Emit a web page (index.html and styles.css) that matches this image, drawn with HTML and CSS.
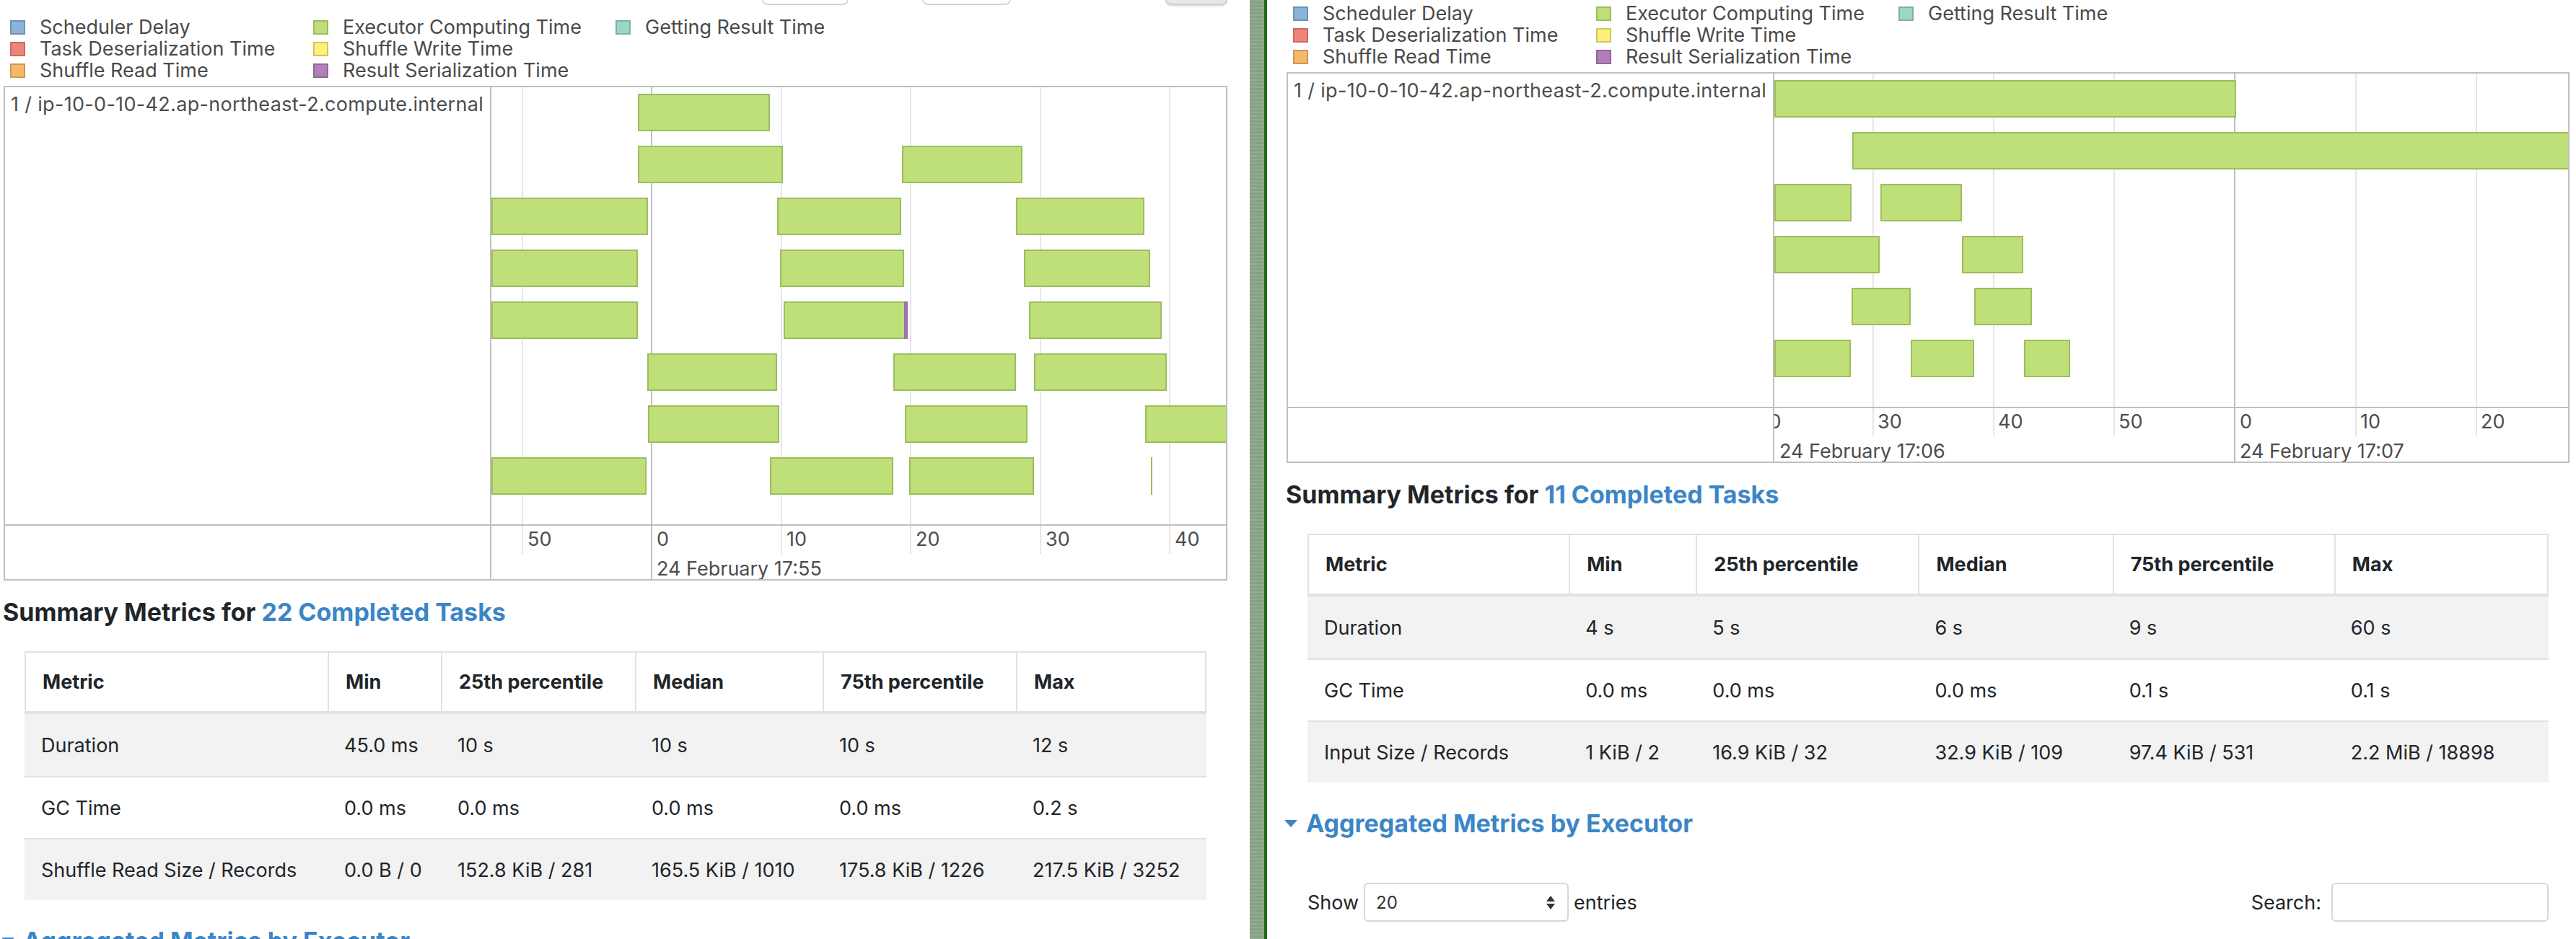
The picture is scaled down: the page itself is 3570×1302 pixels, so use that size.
FILE: index.html
```html
<!DOCTYPE html>
<html lang="en">
<head>
<meta charset="utf-8">
<title>Stage details</title>
<link rel="stylesheet" href="styles.css">
</head>
<body>
<div class="pane pane-left">
  <div class="pane-inner">
    <div class="controls">
      <div class="ctl-input ctl-a"></div>
      <div class="ctl-input ctl-b"></div>
      <div class="ctl-btn"></div>
    </div>
    <div class="legend">
      <div class="lg-item"><span class="sw sw-sched"></span>Scheduler Delay</div>
      <div class="lg-item"><span class="sw sw-deser"></span>Task Deserialization Time</div>
      <div class="lg-item"><span class="sw sw-sread"></span>Shuffle Read Time</div>
      <div class="lg-item"><span class="sw sw-exec"></span>Executor Computing Time</div>
      <div class="lg-item"><span class="sw sw-swrite"></span>Shuffle Write Time</div>
      <div class="lg-item"><span class="sw sw-ser"></span>Result Serialization Time</div>
      <div class="lg-item"><span class="sw sw-get"></span>Getting Result Time</div>
    </div>
    <div class="tl">
      <div class="tl-labels">
        <div class="tl-label">1 / ip-10-0-10-42.ap-northeast-2.compute.internal</div>
        <div class="tl-label-axis"></div>
      </div>
      <div class="tl-chart">
        <div class="gl" style="left:42px"></div>
        <div class="gl gl-major" style="left:221px"></div>
        <div class="gl" style="left:401px"></div>
        <div class="gl" style="left:580px"></div>
        <div class="gl" style="left:760px"></div>
        <div class="gl" style="left:939px"></div>
        <div class="tl-rows">
          <div class="tl-row"><div class="bar" style="left:203px;width:183px"></div></div>
          <div class="tl-row"><div class="bar" style="left:203px;width:201px"></div><div class="bar" style="left:569px;width:167px"></div></div>
          <div class="tl-row"><div class="bar" style="left:0;width:217px"></div><div class="bar" style="left:396px;width:172px"></div><div class="bar" style="left:727px;width:178px"></div></div>
          <div class="tl-row"><div class="bar" style="left:0;width:203px"></div><div class="bar" style="left:400px;width:172px"></div><div class="bar" style="left:738px;width:175px"></div></div>
          <div class="tl-row"><div class="bar" style="left:0;width:203px"></div><div class="bar" style="left:405px;width:172px"><span class="bar-ser"></span></div><div class="bar" style="left:745px;width:184px"></div></div>
          <div class="tl-row"><div class="bar" style="left:216px;width:180px"></div><div class="bar" style="left:557px;width:170px"></div><div class="bar" style="left:752px;width:184px"></div></div>
          <div class="tl-row"><div class="bar" style="left:217px;width:182px"></div><div class="bar" style="left:573px;width:170px"></div><div class="bar" style="left:906px;width:150px"></div></div>
          <div class="tl-row"><div class="bar" style="left:0;width:215px"></div><div class="bar" style="left:386px;width:171px"></div><div class="bar" style="left:579px;width:173px"></div><div class="bar bar-thin" style="left:914px"></div></div>
        </div>
        <div class="tl-axis">
          <span class="tick" style="left:50px">50</span>
          <span class="tick" style="left:229px">0</span>
          <span class="tick" style="left:409px">10</span>
          <span class="tick" style="left:588px">20</span>
          <span class="tick" style="left:768px">30</span>
          <span class="tick" style="left:947px">40</span>
          <span class="tick date" style="left:229px">24 February 17:55</span>
        </div>
      </div>
    </div>
    <h4 class="sec-title">Summary Metrics for <a class="lnk" href="#tasks">22 Completed Tasks</a></h4>
    <table class="metrics m-left">
      <thead>
        <tr><th>Metric</th><th>Min</th><th>25th percentile</th><th>Median</th><th>75th percentile</th><th>Max</th></tr>
      </thead>
      <tbody>
        <tr><td>Duration</td><td>45.0 ms</td><td>10 s</td><td>10 s</td><td>10 s</td><td>12 s</td></tr>
        <tr><td>GC Time</td><td>0.0 ms</td><td>0.0 ms</td><td>0.0 ms</td><td>0.0 ms</td><td>0.2 s</td></tr>
        <tr><td>Shuffle Read Size / Records</td><td>0.0 B / 0</td><td>152.8 KiB / 281</td><td>165.5 KiB / 1010</td><td>175.8 KiB / 1226</td><td>217.5 KiB / 3252</td></tr>
      </tbody>
    </table>
    <h4 class="sec-title agg"><span class="caret"></span>Aggregated Metrics by Executor</h4>
    <div class="dt-controls">
      <div class="dt-len">Show <div class="sel"><span>20</span><span class="sel-arrows"><span class="up"></span><span class="down"></span></span></div> entries</div>
      <div class="dt-search">Search: <input class="search-input" type="search" aria-label="Search"></div>
    </div>
  </div>
</div>
<div class="divider"></div>
<div class="divider-edge"></div>
<div class="pane pane-right">
  <div class="pane-inner">
    <div class="controls">
      <div class="ctl-input ctl-a"></div>
      <div class="ctl-input ctl-b"></div>
      <div class="ctl-btn"></div>
    </div>
    <div class="legend">
      <div class="lg-item"><span class="sw sw-sched"></span>Scheduler Delay</div>
      <div class="lg-item"><span class="sw sw-deser"></span>Task Deserialization Time</div>
      <div class="lg-item"><span class="sw sw-sread"></span>Shuffle Read Time</div>
      <div class="lg-item"><span class="sw sw-exec"></span>Executor Computing Time</div>
      <div class="lg-item"><span class="sw sw-swrite"></span>Shuffle Write Time</div>
      <div class="lg-item"><span class="sw sw-ser"></span>Result Serialization Time</div>
      <div class="lg-item"><span class="sw sw-get"></span>Getting Result Time</div>
    </div>
    <div class="tl">
      <div class="tl-labels">
        <div class="tl-label">1 / ip-10-0-10-42.ap-northeast-2.compute.internal</div>
        <div class="tl-label-axis"></div>
      </div>
      <div class="tl-chart">
        <div class="gl" style="left:-31px"></div>
        <div class="gl" style="left:136px"></div>
        <div class="gl" style="left:303px"></div>
        <div class="gl" style="left:470px"></div>
        <div class="gl gl-major" style="left:637px"></div>
        <div class="gl" style="left:805px"></div>
        <div class="gl" style="left:972px"></div>
        <div class="tl-rows">
          <div class="tl-row"><div class="bar" style="left:0;width:640px"></div></div>
          <div class="tl-row"><div class="bar" style="left:108px;width:1000px"></div></div>
          <div class="tl-row"><div class="bar" style="left:0;width:107px"></div><div class="bar" style="left:147px;width:113px"></div></div>
          <div class="tl-row"><div class="bar" style="left:0;width:146px"></div><div class="bar" style="left:260px;width:85px"></div></div>
          <div class="tl-row"><div class="bar" style="left:107px;width:82px"></div><div class="bar" style="left:277px;width:80px"></div></div>
          <div class="tl-row"><div class="bar" style="left:0;width:106px"></div><div class="bar" style="left:189px;width:88px"></div><div class="bar" style="left:346px;width:64px"></div></div>
        </div>
        <div class="tl-axis">
          <span class="tick" style="left:-24px">20</span>
          <span class="tick" style="left:143px">30</span>
          <span class="tick" style="left:310px">40</span>
          <span class="tick" style="left:477px">50</span>
          <span class="tick" style="left:645px">0</span>
          <span class="tick" style="left:812px">10</span>
          <span class="tick" style="left:979px">20</span>
          <span class="tick date" style="left:7px">24 February 17:06</span>
          <span class="tick date" style="left:645px">24 February 17:07</span>
        </div>
      </div>
    </div>
    <h4 class="sec-title">Summary Metrics for <a class="lnk" href="#tasks">11 Completed Tasks</a></h4>
    <table class="metrics m-right">
      <thead>
        <tr><th>Metric</th><th>Min</th><th>25th percentile</th><th>Median</th><th>75th percentile</th><th>Max</th></tr>
      </thead>
      <tbody>
        <tr><td>Duration</td><td>4 s</td><td>5 s</td><td>6 s</td><td>9 s</td><td>60 s</td></tr>
        <tr><td>GC Time</td><td>0.0 ms</td><td>0.0 ms</td><td>0.0 ms</td><td>0.1 s</td><td>0.1 s</td></tr>
        <tr><td>Input Size / Records</td><td>1 KiB / 2</td><td>16.9 KiB / 32</td><td>32.9 KiB / 109</td><td>97.4 KiB / 531</td><td>2.2 MiB / 18898</td></tr>
      </tbody>
    </table>
    <h4 class="sec-title agg"><span class="caret"></span>Aggregated Metrics by Executor</h4>
    <div class="dt-controls">
      <div class="dt-len">Show <div class="sel"><span>20</span><span class="sel-arrows"><span class="up"></span><span class="down"></span></span></div> entries</div>
      <div class="dt-search">Search: <input class="search-input" type="search" aria-label="Search"></div>
    </div>
  </div>
</div>
</body>
</html>
```

FILE: styles.css
```css
* { box-sizing: border-box; }
html, body { margin: 0; padding: 0; }
body {
  width: 3570px;
  height: 1302px;
  overflow: hidden;
  display: flex;
  font-family: Inter, "Noto Sans", sans-serif;
  font-size: 27px;
  color: #212529;
  background: #fff;
}
.pane { height: 1302px; overflow: hidden; flex: none; }
.pane-left { width: 1732px; padding: 0 31px 0 5px; }
.pane-right { width: 1814px; padding: 0 9px 0 27px; }
.divider {
  width: 20px;
  flex: none;
  background: #8da78b;
  background-image: repeating-linear-gradient(0deg, rgba(255,255,255,0.05) 0 2px, rgba(0,0,0,0.04) 2px 5px);
}
.divider-edge { width: 4px; flex: none; background: #1e6b1f; }
.pane-left .pane-inner { margin-top: -33px; }
.pane-right .pane-inner { margin-top: -52px; }

/* top controls (clipped) */
.controls { display: flex; height: 40px; margin-bottom: 16px; }
.ctl-input { height: 40px; border: 2px solid #d3d8dd; border-radius: 8px; background: #fff; flex: none; }
.ctl-a { width: 120px; margin-left: 1051px; }
.ctl-b { width: 123px; margin-left: 102px; }
.ctl-btn {
  width: 86px; height: 40px; margin-left: auto; flex: none;
  background: #e8e8e8; border: 2px solid #d0d0d0; border-radius: 8px;
  box-shadow: 0 2px 2px rgba(0,0,0,0.12);
}

/* legend */
.legend {
  display: grid;
  grid-template-columns: 420px 419px auto;
  grid-template-rows: repeat(3, 30px);
  grid-auto-flow: column;
  padding-left: 9px;
  margin-bottom: 6px;
  color: #4a4a4a;
}
.lg-item { display: flex; align-items: center; gap: 20px; white-space: nowrap; line-height: 30px; }
.sw { width: 21px; height: 20px; border: 2px solid; flex: none; }
.sw-sched { background: #8bb2d8; border-color: #6e93b3; }
.sw-deser { background: #ee8677; border-color: #c86b5f; }
.sw-sread { background: #f5b96c; border-color: #cf9955; }
.sw-exec { background: #bfdf78; border-color: #9dbc5e; }
.sw-swrite { background: #fdf17b; border-color: #d3c65f; }
.sw-ser { background: #b37fba; border-color: #93679a; }
.sw-get { background: #9dd5c8; border-color: #7fb0a6; }

/* timeline */
.tl { display: flex; border: 2px solid #bfbfbf; color: #4d4d4d; }
.tl-labels { width: 674px; flex: none; border-right: 2px solid #bfbfbf; display: flex; flex-direction: column; }
.tl-label { flex: 1; padding: 7px 8px; line-height: 34px; white-space: nowrap; letter-spacing: 0.32px; }
.tl-label-axis { height: 76px; flex: none; border-top: 2px solid #bfbfbf; }
.tl-chart { flex: 1; min-width: 0; position: relative; overflow: hidden; display: flex; flex-direction: column; }
.gl { position: absolute; top: 0; bottom: 35px; width: 2px; background: #e6e6e6; }
.gl-major { bottom: 0; background: #bfbfbf; }
.tl-rows { display: flex; flex-direction: column; gap: 20px; padding: 9px 0 41px; }
.tl-row { position: relative; height: 52px; }
.bar { position: absolute; top: 0; height: 52px; background: #bfdf78; border: 2px solid #9dbd5e; }
.bar-thin { width: 2px; border: 0; background: #9dbd5e; }
.bar-ser { position: absolute; right: -2px; top: -2px; bottom: -2px; width: 5px; background: #a36fae; }
.tl-axis { height: 76px; flex: none; border-top: 2px solid #bfbfbf; position: relative; }
.tick { position: absolute; top: 4px; line-height: 30px; white-space: nowrap; }
.tick.date { top: 45px; }

/* headings */
.sec-title { font-size: 34px; font-weight: 700; line-height: 42px; margin: 23px 0 0 -1px; color: #212529; white-space: nowrap; }
.lnk { color: #3c85c6; text-decoration: none; }
.agg { color: #3c85c6; margin-top: 36px; display: flex; align-items: center; }
.caret {
  width: 0; height: 0; margin-left: -2px; margin-right: 12px;
  border-left: 9px solid transparent; border-right: 9px solid transparent; border-top: 10px solid #3c85c6;
}

/* metrics table */
.metrics {
  border-collapse: separate;
  border-spacing: 0;
  table-layout: fixed;
  width: calc(100% - 58px);
  margin: 33px 29px 0;
}
.metrics th {
  font-weight: 700; text-align: left; height: 87px; padding: 0 23px;
  border-top: 2px solid #dee2e6; border-bottom: 4px solid #dee2e6; border-left: 2px solid #dee2e6;
  white-space: nowrap;
}
.metrics th:last-child { border-right: 2px solid #dee2e6; }
.metrics td { height: 86px; padding: 0 23px; border-top: 2px solid #dee2e6; white-space: nowrap; }
.metrics tbody tr:first-child td { border-top: 0; }
.metrics tbody tr:nth-child(odd) td { background: #f2f2f2; }
.m-left th:nth-child(1) { width: 420px; }
.m-left th:nth-child(2) { width: 157px; }
.m-left th:nth-child(3) { width: 269px; }
.m-left th:nth-child(4) { width: 260px; }
.m-left th:nth-child(5) { width: 268px; }
.m-left th:nth-child(6) { width: 264px; }
.m-right th:nth-child(1) { width: 362px; }
.m-right th:nth-child(2) { width: 176px; }
.m-right th:nth-child(3) { width: 308px; }
.m-right th:nth-child(4) { width: 269px; }
.m-right th:nth-child(5) { width: 307px; }
.m-right th:nth-child(6) { width: 297px; }

/* datatable controls */
.dt-controls { display: flex; align-items: center; padding: 0 29px; margin-top: 61px; height: 54px; }
.dt-len { display: flex; align-items: center; gap: 7px; }
.sel {
  width: 284px; height: 54px; border: 2px solid #d3d8dd; border-radius: 6px;
  display: flex; align-items: center; justify-content: space-between;
  padding: 0 17px 0 15px; font-size: 24px; color: #333;
}
.sel-arrows { display: flex; flex-direction: column; gap: 3px; }
.up { width: 0; height: 0; border-left: 6px solid transparent; border-right: 6px solid transparent; border-bottom: 8px solid #333; }
.down { width: 0; height: 0; border-left: 6px solid transparent; border-right: 6px solid transparent; border-top: 8px solid #333; }
.dt-search { margin-left: auto; display: flex; align-items: center; gap: 14px; }
.search-input { width: 301px; height: 54px; border: 2px solid #d3d8dd; border-radius: 6px; font: inherit; }
```
